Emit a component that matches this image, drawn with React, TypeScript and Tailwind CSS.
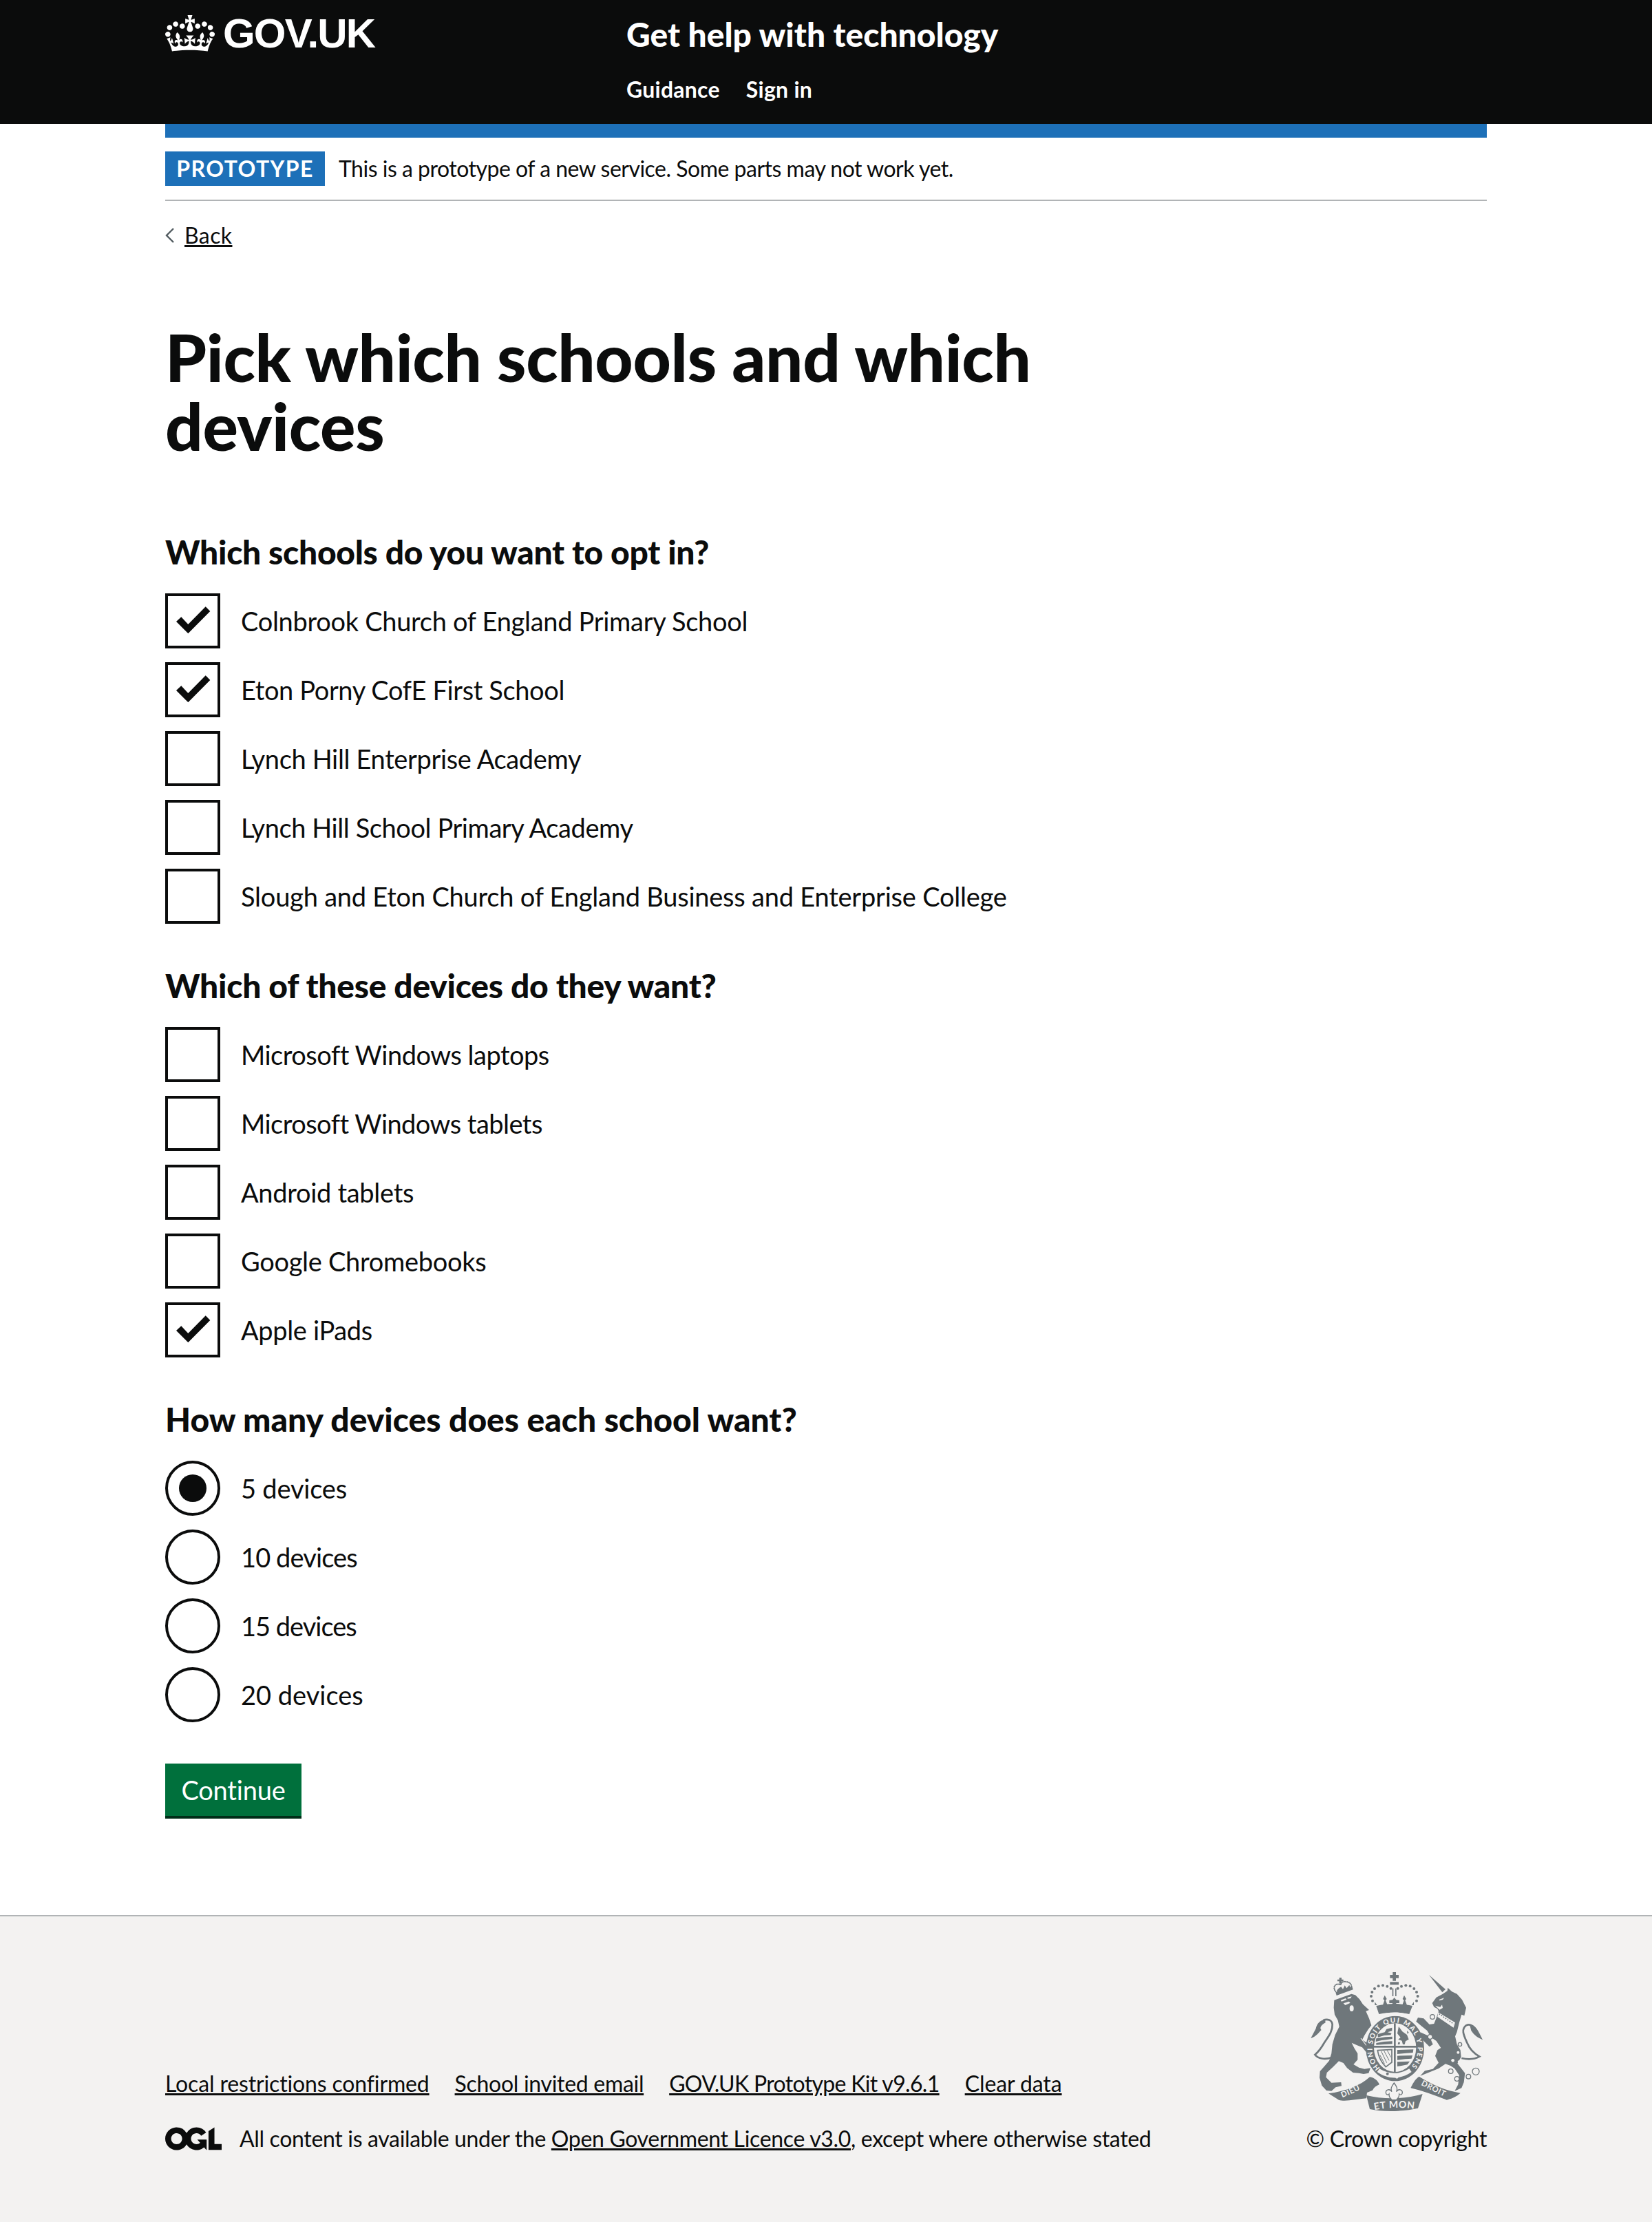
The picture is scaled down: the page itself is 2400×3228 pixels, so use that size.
import React from "react";

const CROWN = "M25 30.2c3.5 1.5 7.7-.2 9.1-3.7 1.5-3.6-.2-7.8-3.9-9.2-3.6-1.4-7.6.3-9.1 3.9-1.4 3.5.3 7.5 3.9 9zM9 39.5c3.6 1.5 7.8-.2 9.2-3.7 1.5-3.6-.2-7.8-3.9-9.1-3.6-1.5-7.6.2-9.1 3.8-1.4 3.5.3 7.5 3.8 9zM4.4 57.2c3.5 1.5 7.7-.2 9.1-3.8 1.5-3.6-.2-7.7-3.9-9.1-3.5-1.5-7.6.3-9.1 3.8-1.4 3.5.3 7.6 3.9 9.1zm38.3-21.4c3.5 1.5 7.7-.2 9.1-3.8 1.5-3.6-.2-7.7-3.9-9.1-3.6-1.5-7.6.3-9.1 3.8-1.3 3.6.4 7.7 3.9 9.1zm64.4-5.6c-3.6 1.5-7.8-.2-9.1-3.7-1.5-3.6.2-7.8 3.8-9.2 3.6-1.4 7.7.3 9.2 3.9 1.3 3.5-.4 7.5-3.9 9zm15.9 9.3c-3.6 1.5-7.7-.2-9.1-3.7-1.5-3.6.2-7.8 3.7-9.1 3.6-1.5 7.7.2 9.2 3.8 1.5 3.5-.3 7.5-3.8 9zm4.7 17.7c-3.6 1.5-7.8-.2-9.2-3.8-1.5-3.6.2-7.7 3.9-9.1 3.6-1.5 7.7.3 9.2 3.8 1.3 3.5-.4 7.6-3.9 9.1zM89.3 35.8c-3.6 1.5-7.8-.2-9.2-3.8-1.4-3.6.2-7.7 3.9-9.1 3.6-1.5 7.7.3 9.2 3.8 1.4 3.6-.3 7.7-3.9 9.1zM69.7 17.7l8.9 4.7V9.3l-8.9 2.8c-.2-.3-.5-.6-.9-.9L72.4 0H59.6l3.5 11.2c-.3.3-.6.5-.9.9l-8.8-2.8v13.1l8.8-4.7c.3.3.6.7.9.9l-5 15.4v.1c-.2.8-.4 1.6-.4 2.4 0 4.1 3.1 7.5 7 8.1h.2c.3 0 .7.1 1 .1.4 0 .7 0 1-.1h.2c4-.6 7.1-4.1 7.1-8.1 0-.8-.1-1.7-.4-2.4V34l-5.1-15.4c.4-.2.7-.6 1-.9zM66 92.8c16.9 0 32.8 1.1 47.1 3.2 4-16.9 8.9-26.7 14-33.5l-9.6-3.4c1 4.9 1.1 7.2 0 10.2-1.5-1.4-3-4.3-4.2-8.7L108.6 76c2.8-2 5-3.2 7.5-3.3-4.4 9.4-10 11.9-13.6 11.2-4.3-.8-6.3-4.6-5.6-7.9 1-4.7 5.7-5.9 8-.5 4.3-8.7-3-11.4-7.6-8.8 7.1-7.2 7.9-13.5 2.1-21.1-8 6.1-8.1 12.3-4.5 20.8-4.7-5.4-12.1-2.5-9.5 6.2 3.4-5.2 7.9-2 7.2 3.1-.6 4.3-6.4 7.8-13.5 7.2-10.3-.9-10.9-8-11.2-13.8 2.5-.5 7.1 1.8 11 7.3L80.2 60c-4.1 4.4-8 5.3-12.3 5.4 1.4-4.4 8-11.6 8-11.6H55.5s6.4 7.2 7.9 11.6c-4.2-.1-8-1-12.3-5.4l1.4 16.4c3.9-5.5 8.5-7.7 10.9-7.3-.3 5.8-.9 12.8-11.1 13.8-7.2.6-12.9-2.9-13.5-7.2-.7-5 3.8-8.3 7.1-3.1 2.7-8.7-4.6-11.6-9.4-6.2 3.7-8.5 3.6-14.7-4.6-20.8-5.8 7.6-5 13.9 2.2 21.1-4.7-2.6-11.9.1-7.7 8.8 2.3-5.5 7.1-4.2 8.1.5.7 3.3-1.3 7.1-5.7 7.9-3.5.7-9-1.8-13.5-11.2 2.5.1 4.7 1.3 7.5 3.3l-4.7-15.4c-1.2 4.4-2.7 7.2-4.3 8.7-1.1-3-.9-5.3 0-10.2l-9.5 3.4c5 6.9 9.9 16.7 14 33.5 14.8-2.1 30.8-3.2 47.7-3.2z";
const OGL = "M421.5 142.8V.1l-50.7 32.3v161.1h112.4v-50.7zm-122.3-9.6A47.12 47.12 0 0 1 221 97.8c0-26 21.1-47.1 47.1-47.1 16.7 0 31.4 8.7 39.7 21.8l42.7-27.2A97.63 97.63 0 0 0 268.1 0c-36.5 0-68.3 20.1-85.1 49.7A98 98 0 0 0 97.8 0C43.9 0 0 43.9 0 97.8s43.9 97.8 97.8 97.8c36.5 0 68.3-20.1 85.1-49.7a97.76 97.76 0 0 0 149.6 25.4l19.4 22.2h3v-87.8h-80l24.3 27.5zM97.8 145c-26 0-47.1-21.1-47.1-47.1s21.1-47.1 47.1-47.1 47.2 21 47.2 47S123.8 145 97.8 145";

function Crest() {
  const g = "#6f777b";
  const bg = "#f3f2f1";
  const dots: [number, number][] = [[372,200],[366,180],[370,162],[381,147],[398,136],[417,133],[436,137],[452,146],[482,146],[498,137],[517,133],[536,136],[553,147],[564,162],[569,180],[564,200]];
  return (
    <svg viewBox="0 0 795 660" className="w-[265px] h-[220px]" aria-hidden="true">
      <g fill={g}>
        <path d="M152 54h10v8h8v8h-8v10h-10V70h-8v-8h8z" />
        <path d="M136 118l72-26 4 14-72 26z" />
        <path d="M140 116c4-14 14-18 20-22l8 10 8-16 8 12 12-14 6 18z" />
        <g fill="none" stroke={g} strokeWidth="6" strokeDasharray="1 6" strokeLinecap="round">
          <path d="M136 114c-16-20 2-40 22-28 4-16 16-16 24-14 16 0 30 16 20 32" />
        </g>
        <path d="M130 152L205 125L222 130L240 148L255 170L282 195L268 200L282 232L292 262L278 280L262 305L252 325L272 338L292 362L302 388L288 398L272 382L252 358L228 348L206 338L218 362L232 385L232 412L214 432L238 446L262 452L288 448L280 470L258 474L238 470L212 468L186 448L170 426L150 418L124 444L98 468L94 488L118 512L160 510L162 526L136 532L118 548L96 546L76 524L66 490L68 462L84 444L108 416L118 384L122 344L134 304L152 268L146 240L132 215L128 185Z" />
        <path fill="none" stroke={g} strokeWidth="8" d="M120 402C90 412 60 408 46 390C62 376 74 360 84 342C100 316 124 290 122 258C120 238 100 232 82 240" />
        <path d="M90 236C66 240 54 256 50 276L28 318C52 310 60 296 74 282C66 276 70 262 92 250Z" />
      </g>
      <path fill={bg} d="M158 152l22-8 4 6-22 8zM188 140l18-4-4 8-14 2zM170 166l24-8 6 6-22 10z" />
      <ellipse cx="206" cy="188" rx="9" ry="13" fill={bg} />
      <path fill="none" stroke={bg} strokeWidth="3.5" d="M246 318l46 60" />
      <g transform="translate(-75 -45)">
        <path fill={g} d="M460 75h14v12h12v14h-12v12h-14v-12h-12V87h12z" />
        <rect x="448" y="118" width="38" height="12" fill={g} />
        <rect x="458" y="146" width="5" height="34" fill={g} />
        <rect x="471" y="146" width="5" height="34" fill={g} />
        {dots.map(([x, y]) => <circle key={x + "-" + y} cx={x} cy={y} r="6" fill={g} />)}
        <path fill={g} d="M388 222c50-12 108-12 158 0l-14 36c-40-9-92-9-132 0z" />
        <path fill={g} d="M425 176l9 16-5 6 8 20h-20l7-20-6-6zM510 176l9 16-5 6 8 20h-20l7-20-6-6zM467 186l8 10 14 2v12h-14l2 10h-20l2-10h-14v-12l14-2z" />
        <path fill={g} d="M382 205l10 14h-10zM552 205l-10 14h10z" />
        <ellipse cx="470" cy="408" rx="127" ry="142" fill={g} />
        <path fill={bg} d="M396 264c44-18 100-18 144 0l-6 12c-40-14-92-14-132 0z" />
        <ellipse cx="470" cy="404" rx="92" ry="106" fill={bg} />
        <rect x="465" y="298" width="8" height="214" fill={g} />
        <rect x="376" y="396" width="188" height="8" fill={g} />
        <g fill={g}>
          <path d="M395 345l30-8 8-14 24-6v14l-20 6 18 4-4 8-28 2-28 8zM388 364l40-6 30-2v10l-26 4-20 2-26 6zM388 384l34-6 36-2v12l-36 2-34 2z" />
          <path d="M486 312l16 22 20 14 8 20-14 8-4 14h-8l-4-16-16-6 10-8-14-18zM522 330l8 8-6 6zM484 380l8 2-2 8h-8z" />
          <path d="M480 414l70-2-2 14-30 2-38 4zM480 440l66-2-4 14-28 2-34 4zM480 466l54-2-10 14-22 4-22 4z" />
        </g>
        <path fill="none" stroke={g} strokeWidth="5" d="M394 416l62-4 0 56-26 20c-18-18-32-42-36-72z" />
        <path fill="none" stroke={g} strokeWidth="3" d="M410 420l24 50M422 418l22 42M404 436l20 38M436 416l16 30" />
        <path id="gt" fill="none" d="M405 493A99 113 0 1 1 535 493" />
        <text fill={bg} fontFamily="Lato, sans-serif" fontWeight="900" fontSize="30" letterSpacing="5">
          <textPath href="#gt" startOffset="0">HONI SOIT QUI MAL Y PENSE</textPath>
        </text>
        <path fill={bg} d="M392 510c50 34 100 34 150 0l-10-14c-42 26-88 26-130 0z" />
        <circle cx="437" cy="518" r="6" fill={g} />
        <circle cx="478" cy="532" r="7" fill={bg} />
        <path fill={g} d="M180 604C250 595 320 570 360 532C380 535 395 548 402 565L372 590L348 600L345 625C300 630 250 640 225 632Z" />
        <path fill={g} d="M345 612C420 630 510 630 590 606L570 668C510 682 420 686 360 672Z" />
        <path fill={g} d="M538 580C552 552 560 540 575 530C640 570 690 590 755 602C735 620 712 628 695 632C640 610 590 592 538 580Z" />
        <path fill={bg} d="M372 590C378 578 388 570 402 565L408 580L388 606zM538 580L560 596L576 610L548 606L530 592z" />
        <path id="r1" fill="none" d="M240 622C280 606 320 588 352 564" />
        <path id="r2" fill="none" d="M380 676C440 664 500 664 556 672" />
        <path id="r3" fill="none" d="M582 566C620 586 660 606 696 624" />
        <g fill={bg} fontFamily="Lato, sans-serif" fontWeight="700" letterSpacing="2">
          <text fontSize="34"><textPath href="#r1">DIEU</textPath></text>
          <text fontSize="42"><textPath href="#r2">ET MON</textPath></text>
          <text fontSize="34"><textPath href="#r3">DROIT</textPath></text>
        </g>
        <path fill={bg} stroke={g} strokeWidth="4" d="M466 558c12 16 16 24 10 38 8-14 26-10 26 4 0 10-10 12-14 6 0 8 0 14-6 18l-6 8h-20l-6-8c-6-4-6-10-6-18-4 6-14 4-14-6 0-14 18-18 26-4-6-14-2-22 10-38z" />
      </g>
      <g transform="translate(375 0)">
        <g fill={g}>
          <path d="M168 42L240 105L226 118Z" />
          <path d="M182 165L200 140L228 125L248 112L250 98L268 115L290 125L312 150L330 185L322 220L310 215L300 250L290 290L282 310L290 345L305 370L308 400L292 428L305 445L325 470L320 510L310 535L280 548L295 520L300 480L280 450L262 438L240 430L210 450L160 470L130 482L150 460L185 452L210 425L195 395L205 370L220 360L200 330L178 315L160 285L135 265L112 245L120 228L145 232L170 258L190 255L200 230L210 200L205 190L190 182Z" />
          <path d="M130 292L170 310L185 345L170 355L135 320Z" />
          <path d="M345 258C372 258 385 290 402 325C380 315 365 305 352 285Z" />
        </g>
        <path fill="none" stroke={g} strokeWidth="8" d="M310 405C340 412 370 408 388 398C365 385 345 365 335 340C322 310 305 280 330 262C345 255 360 262 368 280" />
        <path fill={bg} d="M212 150l22-8-6 8-14 4zM195 176l22 6 8-10 3 14-14 8z" />
        <path fill={bg} d="M208 205L282 250L275 272L205 225Z" />
        <path fill="none" stroke={g} strokeWidth="5" strokeDasharray="5 6" d="M212 212L276 256" />
        <circle cx="183" cy="225" r="10" fill={bg} stroke={g} strokeWidth="4" />
        <circle cx="173" cy="312" r="10" fill={bg} stroke={g} strokeWidth="4" />
        <circle cx="303" cy="345" r="8" fill={bg} stroke={g} strokeWidth="4" />
        <circle cx="295" cy="380" r="6" fill={bg} />
        <circle cx="272" cy="415" r="7" fill={bg} />
        <circle cx="298" cy="420" r="5" fill={bg} />
        <g fill="none" stroke={g} strokeWidth="4">
          <circle cx="263" cy="462" r="10" />
          <circle cx="290" cy="495" r="10" />
          <circle cx="340" cy="485" r="10" />
          <circle cx="372" cy="463" r="15" />
        </g>
      </g>
    </svg>
  );
}

function Check({ label, checked, t }: { label: string; checked?: boolean; t: string }) {
  return (
    <div className="flex items-center h-[80px] mb-5">
      <div className="relative w-[80px] h-[80px] border-4 border-[#0b0c0c] shrink-0">
        {checked && (
          <svg viewBox="0 0 80 80" className="absolute -left-1 -top-1 w-[80px] h-[80px]" aria-hidden="true">
            <path d="M16 41L23.3 34.3L33.3 45L58.7 19.3L65.3 26L33.3 58.3Z" fill="#0b0c0c" />
          </svg>
        )}
      </div>
      <span className={"ml-[30px] text-[38px] leading-[50px] " + t}>{label}</span>
    </div>
  );
}

function Radio({ label, checked, t }: { label: string; checked?: boolean; t: string }) {
  return (
    <div className="flex items-center h-[80px] mb-5">
      <div className="flex items-center justify-center w-[80px] h-[80px] border-4 border-[#0b0c0c] rounded-full shrink-0">
        {checked && <div className="w-[40px] h-[40px] rounded-full bg-[#0b0c0c]" />}
      </div>
      <span className={"ml-[30px] text-[38px] leading-[50px] " + t}>{label}</span>
    </div>
  );
}

function Question({ children, t }: { children: React.ReactNode; t: string }) {
  return <h2 className={"text-[48px] leading-[60px] font-black mb-[30px] " + t}>{children}</h2>;
}

export default function App() {
  return (
    <div className="font-[Lato,sans-serif] text-[#0b0c0c] bg-white min-h-[3228px] flex flex-col">
      <header className="bg-[#0b0c0c] h-[180px] text-white shrink-0">
        <div className="w-[1920px] mx-auto flex">
          <div className="w-[670px] flex items-start pt-[22px] gap-[12px]">
            <svg viewBox="0 0 132 97" className="w-[72px] h-[53px]" aria-hidden="true">
              <path fill="currentColor" fillRule="evenodd" d={CROWN} />
            </svg>
            <span className="font-['Liberation_Sans',sans-serif] font-bold text-[60px] leading-[54px] tracking-[-1.8px]">GOV.UK</span>
          </div>
          <div className="pt-[20px]">
            <div className="text-[48px] leading-[60px] font-black">Get help with technology</div>
            <nav className="flex gap-[38px] mt-[30px] text-[32px] leading-[40px] font-bold tracking-[0.25px]">
              <span>Guidance</span>
              <span>Sign in</span>
            </nav>
          </div>
        </div>
      </header>
      <main className="w-[1920px] mx-auto flex-1">
        <div className="h-[20px] bg-[#1d70b8]" />
        <div className="flex items-center pt-5 pb-5 border-b-2 border-[#b1b4b6]">
          <span className="flex items-center justify-center w-[232px] h-[50px] bg-[#1d70b8] text-white font-bold text-[32px] tracking-[1.4px]">PROTOTYPE</span>
          <span className="ml-5 text-[32px] leading-[50px] tracking-[-0.5px]">This is a prototype of a new service. Some parts may not work yet.</span>
        </div>
        <a className="flex items-center mt-[30px] text-[32px] leading-[40px] underline tracking-[0.4px]">
          <svg viewBox="0 0 14 24" className="w-[14px] h-[24px] mr-[14px]" aria-hidden="true">
            <path d="M12 2L2 12l10 10" fill="none" stroke="#505a5f" strokeWidth="2.4" />
          </svg>
          Back
        </a>
        <h1 className="mt-[106px] w-[1400px] text-[96px] leading-[100px] font-black tracking-[-0.33px] mb-[104px]">Pick which schools and which devices</h1>
        <Question t="tracking-[-0.3px]">Which schools do you want to opt in?</Question>
        <Check t="tracking-[-0.3px]" label="Colnbrook Church of England Primary School" checked />
        <Check t="tracking-[-0.37px]" label="Eton Porny CofE First School" checked />
        <Check t="tracking-[-0.35px]" label="Lynch Hill Enterprise Academy" />
        <Check t="tracking-[-0.42px]" label="Lynch Hill School Primary Academy" />
        <Check t="tracking-[-0.22px]" label="Slough and Eton Church of England Business and Enterprise College" />
        <div className="h-[40px]" />
        <Question t="tracking-[-0.26px]">Which of these devices do they want?</Question>
        <Check t="tracking-[-0.5px]" label="Microsoft Windows laptops" />
        <Check t="tracking-[-0.54px]" label="Microsoft Windows tablets" />
        <Check t="tracking-[-0.3px]" label="Android tablets" />
        <Check t="tracking-[-0.3px]" label="Google Chromebooks" />
        <Check t="tracking-[-0.35px]" label="Apple iPads" checked />
        <div className="h-[40px]" />
        <Question t="tracking-[0px]">How many devices does each school want?</Question>
        <Radio t="tracking-[-0.2px]" label="5 devices" checked />
        <Radio t="tracking-[-0.9px]" label="10 devices" />
        <Radio t="tracking-[-1px]" label="15 devices" />
        <Radio t="tracking-[0px]" label="20 devices" />
        <button className="mt-[60px] block w-[198px] h-[80px] bg-[#00703c] border-b-4 border-[#002d18] text-white text-[38px] leading-[50px] tracking-[-0.2px]">Continue</button>
      </main>
      <footer className="bg-[#f3f2f1] border-t-2 border-[#b1b4b6] h-[446px] shrink-0">
        <div className="w-[1920px] mx-auto flex justify-between items-end pt-[71px]">
          <div>
            <div className="flex gap-[37px] text-[32px] leading-[40px] underline">
              <span className="tracking-[-0.15px]">Local restrictions confirmed</span>
              <span className="tracking-[-0.3px]">School invited email</span>
              <span className="tracking-[-0.67px]">GOV.UK Prototype Kit v9.6.1</span>
              <span className="tracking-[-0.1px]">Clear data</span>
            </div>
            <div className="flex items-center mt-[40px] text-[32px] leading-[40px] tracking-[-0.33px]">
              <svg viewBox="0 0 483.2 195.7" className="w-[82px] h-[34px] mr-[26px]" aria-hidden="true">
                <path fill="currentColor" d={OGL} />
              </svg>
              <span>All content is available under the <span className="underline">Open Government Licence v3.0</span>, except where otherwise stated</span>
            </div>
          </div>
          <div className="flex flex-col items-end">
            <Crest />
            <div className="text-[32px] leading-[40px] mt-[12px] tracking-[-0.35px]">© Crown copyright</div>
          </div>
        </div>
      </footer>
    </div>
  );
}
